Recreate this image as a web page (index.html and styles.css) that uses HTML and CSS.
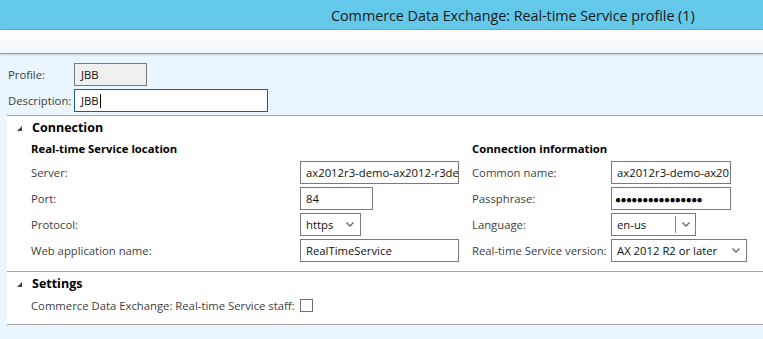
FILE: index.html
```html
<!DOCTYPE html>
<html>
<head>
<meta charset="utf-8">
<link rel="stylesheet" href="styles.css">
</head>
<body>
<div class="titlebar"><span class="title">Commerce Data Exchange: Real-time Service profile (1)</span></div>
<div class="toolbar"></div>
<div class="content">
  <div class="topform">
    <div class="row"><span class="tlabel">Profile:</span><div class="field ro w73">JBB</div></div>
    <div class="row"><span class="tlabel">Description:</span><div class="field focus w193">JBB<span class="caret"></span></div></div>
  </div>
  <div class="panel">
    <div class="section">
      <div class="shead"><span class="tri"></span>Connection</div>
      <div class="cols">
        <div class="col left">
          <div class="sub">Real-time Service location</div>
          <div class="frow"><span class="flabel">Server:</span><div class="field w159">ax2012r3-demo-ax2012-r3de</div></div>
          <div class="frow"><span class="flabel">Port:</span><div class="field w73">84</div></div>
          <div class="frow"><span class="flabel">Protocol:</span><div class="field sel w61"><span class="stext">https</span><svg class="chev" width="8" height="5" viewBox="0 0 8 5"><path d="M0.5 0.5 L4 4 L7.5 0.5" fill="none" stroke="#6a6a6a" stroke-width="1.4"/></svg></div></div>
          <div class="frow"><span class="flabel">Web application name:</span><div class="field w159">RealTimeService</div></div>
        </div>
        <div class="col right">
          <div class="sub">Connection information</div>
          <div class="frow"><span class="flabel r">Common name:</span><div class="field w120">ax2012r3-demo-ax20</div></div>
          <div class="frow"><span class="flabel r">Passphrase:</span><div class="field w120 dots">●●●●●●●●●●●●●●●●</div></div>
          <div class="frow"><span class="flabel r">Language:</span><div class="field sel w86 split"><span class="stext">en-us</span><span class="sep"></span><svg class="chev" width="8" height="5" viewBox="0 0 8 5"><path d="M0.5 0.5 L4 4 L7.5 0.5" fill="none" stroke="#6a6a6a" stroke-width="1.4"/></svg></div></div>
          <div class="frow"><span class="flabel r">Real-time Service version:</span><div class="field sel w136"><span class="stext">AX 2012 R2 or later</span><svg class="chev" width="8" height="5" viewBox="0 0 8 5"><path d="M0.5 0.5 L4 4 L7.5 0.5" fill="none" stroke="#6a6a6a" stroke-width="1.4"/></svg></div></div>
        </div>
      </div>
    </div>
    <div class="section settings">
      <div class="shead"><span class="tri"></span>Settings</div>
      <div class="staff"><span>Commerce Data Exchange: Real-time Service staff:</span><span class="check"></span></div>
    </div>
  </div>
</div>
</body>
</html>
```
FILE: styles.css
```css
* { box-sizing: border-box; }
html, body { margin: 0; padding: 0; }
body {
  width: 763px;
  height: 339px;
  overflow: hidden;
  background: #eaf5fd;
  font-family: "Open Sans", "Noto Sans", sans-serif;
  font-size: 11.3px;
  color: #404040;
}
.titlebar {
  height: 30px;
  background: #64c8e9;
  border-bottom: 1px solid #4fb0d4;
  display: flex;
  align-items: center;
  padding-left: 331px;
}
.title {
  font-size: 14.4px;
  color: #1a1a1a;
  letter-spacing: -0.05px;
  padding-top: 1px;
}
.toolbar {
  height: 24px;
  background: linear-gradient(#ffffff, #f2f8fe);
  border-bottom: 1px solid #9a9a9a;
  box-shadow: 0 1px 2px #c4ccd4;
}
.content { padding-top: 9px; }
.topform {
  padding-left: 8px;
  display: flex;
  flex-direction: column;
  gap: 3px;
}
.row { display: flex; align-items: center; height: 23px; }
.tlabel { width: 66px; }
.field {
  height: 23px;
  border: 1px solid #7a7a7a;
  background: #fff;
  color: #111;
  display: flex;
  align-items: center;
  padding-left: 5px;
  overflow: hidden;
  white-space: nowrap;
}
.ro { background: #f0f0f0; padding-left: 6px; }
.focus { border-color: #24598a; padding-left: 6px; }
.caret { display: inline-block; width: 1px; height: 14px; background: #000; margin-left: 1px; }
.w73 { width: 73px; }
.w193 { width: 194px; }
.w159 { width: 159px; }
.w61 { width: 61px; }
.w120 { width: 120px; }
.w86 { width: 85px; }
.w136 { width: 136px; }
.panel {
  margin-left: 7px;
  margin-top: 3px;
  background: #fff;
  border-top: 1px solid #a6a6a6;
  border-bottom: 1px solid #a6a6a6;
}
.section { padding-bottom: 9px; }
.settings { border-top: 1px solid #a6a6a6; padding-bottom: 7px; }
.shead {
  height: 22px;
  display: flex;
  align-items: center;
  padding-left: 9px;
  font-weight: bold;
  font-size: 12.5px;
  color: #000;
}
.tri {
  width: 0; height: 0;
  border-left: 5px solid transparent;
  border-bottom: 5px solid #444;
  margin-right: 10px;
  margin-left: 1px;
  margin-top: 2px;
}
.cols { display: flex; padding-left: 24px; }
.col { display: flex; flex-direction: column; gap: 3px; }
.left { width: 441px; }
.sub {
  font-weight: bold;
  font-size: 11.3px;
  color: #000;
  height: 20px;
  display: flex;
  align-items: center;
}
.frow { display: flex; align-items: center; height: 23px; }
.left .flabel { width: 269px; }
.right .flabel { width: 139px; }
.sel { justify-content: space-between; padding-right: 6px; }
.split { padding-right: 5px; }
.split .stext { flex: 1; }
.sep { width: 1px; height: 17px; background: #8a8a8a; margin-right: 6px; }
.dots { font-size: 10px; letter-spacing: -0.6px; padding-left: 3px; color: #000; }
.staff {
  padding-left: 24px;
  height: 23px;
  display: flex;
  align-items: center;
  gap: 5px;
}
.check {
  width: 13px; height: 13px;
  border: 1px solid #707070;
  background: #fff;
}
```
